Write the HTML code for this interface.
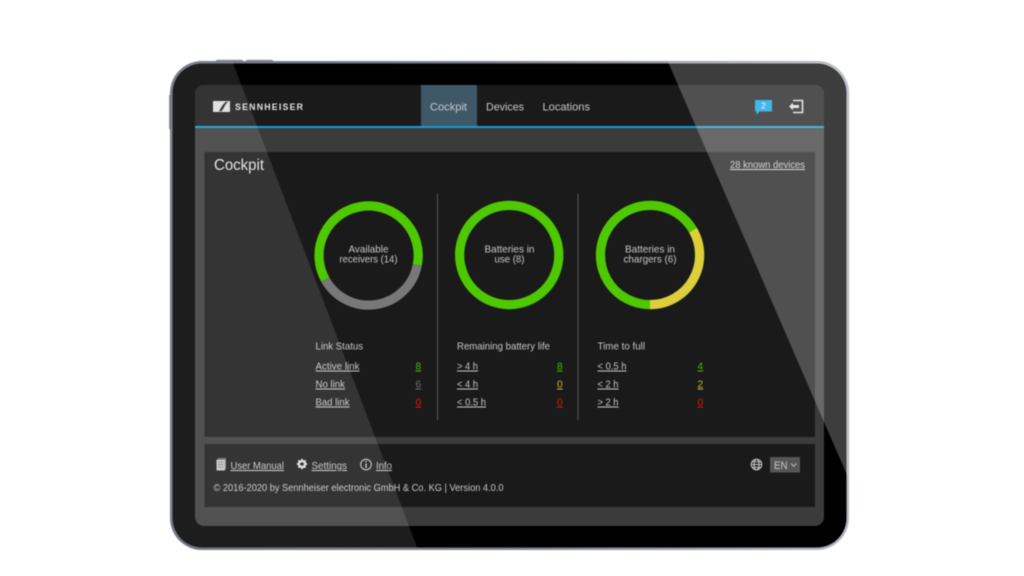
<!DOCTYPE html>
<html><head><meta charset="utf-8"><title>Cockpit</title>
<style>
html,body{margin:0;padding:0;background:#fff;width:1024px;height:576px;overflow:hidden}
svg{display:block;filter:blur(.4px)}
text{font-family:"Liberation Sans",sans-serif;fill:#c8c8c8;font-size:10.200px}
.u{text-decoration:underline}
.c{text-anchor:middle}
</style></head><body>
<svg width="1024" height="576" viewBox="0 0 1024 576" xmlns="http://www.w3.org/2000/svg">
<defs>
<linearGradient id="edge" x1="0" x2="1" y1="0" y2="0"><stop offset="0" stop-color="#6f7686"/><stop offset=".5" stop-color="#7e8390"/><stop offset="1" stop-color="#b2b7c2"/></linearGradient>
<clipPath id="body"><rect x="171" y="62" width="677" height="486" rx="31"/></clipPath>
</defs>
<!-- side buttons -->
<rect x="216" y="59.800" width="27" height="2" rx="1" fill="#8a8f9a"/>
<rect x="246" y="59.800" width="27" height="2" rx="1" fill="#8a8f9a"/>
<rect x="169.200" y="95" width="1.500" height="34" fill="#6d7280"/>
<!-- tablet -->
<rect x="170" y="61" width="679" height="489" rx="32" fill="url(#edge)"/>
<rect x="172.500" y="63.500" width="674" height="484" rx="29.500" fill="#000"/>
<!-- screen -->
<rect x="195" y="85" width="629" height="441" rx="9" fill="#3b3b3b"/>
<path d="M195 126V94a9 9 0 0 1 9-9H815a9 9 0 0 1 9 9V126Z" fill="#1a1a1a"/>
<rect x="421" y="85" width="56" height="41" fill="#3f5867"/>
<rect x="195" y="126" width="629" height="2" fill="#169bd0"/>
<!-- logo -->
<rect x="213" y="101" width="17" height="11" fill="#dedede"/>
<path d="M219 111.300C221.500 107 223 104 226 101.700H228C225 104 224 108 221.500 111.300Z" fill="#1a1a1a"/>
<text x="235" y="110" textLength="68" lengthAdjust="spacing" style="font-weight:700;font-size:8.800px;fill:#e2e2e2">SENNHEISER</text>
<!-- nav -->
<text x="430" y="110.500" textLength="37" lengthAdjust="spacingAndGlyphs" style="font-size:11px">Cockpit</text>
<text x="486" y="110.500" textLength="38" lengthAdjust="spacingAndGlyphs" style="font-size:11px">Devices</text>
<text x="542.500" y="110.500" textLength="47.500" lengthAdjust="spacingAndGlyphs" style="font-size:11px">Locations</text>
<!-- message icon -->
<path d="M755 100H772V111.500H759.500L756.500 115V111.500H755Z" fill="#0a9fe6"/>
<text x="763.500" y="108.500" class="c" style="font-size:8.500px;fill:#f0f8fc">2</text>
<!-- logout icon -->
<path d="M793 100.500H802.500V112.500H793" fill="none" stroke="#d8d8d8" stroke-width="1.600"/>
<path d="M789 106.500L793 102.800V105H799V108H793V110.200Z" fill="#e0e0e0"/>
<!-- main panel -->
<rect x="204.500" y="152" width="610.500" height="285" fill="#1a1a1a"/>
<text x="214" y="170" textLength="50" lengthAdjust="spacingAndGlyphs" style="font-size:15.500px;fill:#e0e0e0">Cockpit</text>
<text x="730" y="168" textLength="75" lengthAdjust="spacingAndGlyphs" class="u">28 known devices</text>
<rect x="437" y="194" width="1" height="226" fill="#5a5a5a"/>
<rect x="577.500" y="194" width="1" height="226" fill="#5a5a5a"/>
<!-- rings -->
<path d="M325.200 279.500A49.600 49.600 0 1 1 417.300 265" fill="none" stroke="#4ec900" stroke-width="9.200"/>
<path d="M417.300 265A49.600 49.600 0 0 1 325.200 279.500" fill="none" stroke="#787878" stroke-width="9.200"/>
<circle cx="509.200" cy="255" r="49.600" fill="none" stroke="#4ec900" stroke-width="9.200"/>
<path d="M693 230.200A49.600 49.600 0 1 0 650 304.600" fill="none" stroke="#4ec900" stroke-width="9.200"/>
<path d="M693 230.200A49.600 49.600 0 0 1 650 304.600" fill="none" stroke="#dccf3a" stroke-width="9.200"/>
<text x="368.500" y="252.500" class="c" textLength="40" lengthAdjust="spacingAndGlyphs">Available</text>
<text x="368.500" y="262.500" class="c" textLength="58" lengthAdjust="spacingAndGlyphs">receivers (14)</text>
<text x="509.500" y="252.500" class="c" textLength="50" lengthAdjust="spacingAndGlyphs">Batteries in</text>
<text x="509.500" y="262.500" class="c" textLength="30" lengthAdjust="spacingAndGlyphs">use (8)</text>
<text x="650" y="252.500" class="c" textLength="50" lengthAdjust="spacingAndGlyphs">Batteries in</text>
<text x="650" y="262.500" class="c" textLength="53" lengthAdjust="spacingAndGlyphs">chargers (6)</text>
<!-- col 1 -->
<text x="315.500" y="349.500" textLength="47.500" lengthAdjust="spacingAndGlyphs">Link Status</text>
<text x="315.500" y="369.500" textLength="44" lengthAdjust="spacingAndGlyphs" class="u">Active link</text>
<text x="315.500" y="387.500" textLength="29.500" lengthAdjust="spacingAndGlyphs" class="u">No link</text>
<text x="315.500" y="405.500" textLength="34" lengthAdjust="spacingAndGlyphs" class="u">Bad link</text>
<text x="415.500" y="369.500" class="u" style="fill:#4fb800">8</text>
<text x="415.500" y="387.500" class="u" style="fill:#6e6e6e">6</text>
<text x="415.500" y="405.500" class="u" style="fill:#d81e05">0</text>
<!-- col 2 -->
<text x="457" y="349.500" textLength="93" lengthAdjust="spacingAndGlyphs">Remaining battery life</text>
<text x="457" y="369.500" textLength="21" lengthAdjust="spacingAndGlyphs" class="u">&gt; 4 h</text>
<text x="457" y="387.500" textLength="21" lengthAdjust="spacingAndGlyphs" class="u">&lt; 4 h</text>
<text x="457" y="405.500" textLength="29" lengthAdjust="spacingAndGlyphs" class="u">&lt; 0.5 h</text>
<text x="557" y="369.500" class="u" style="fill:#4fb800">8</text>
<text x="557" y="387.500" class="u" style="fill:#c6ba2e">0</text>
<text x="557" y="405.500" class="u" style="fill:#d81e05">0</text>
<!-- col 3 -->
<text x="597.500" y="349.500" textLength="47.500" lengthAdjust="spacingAndGlyphs">Time to full</text>
<text x="597.500" y="369.500" textLength="29" lengthAdjust="spacingAndGlyphs" class="u">&lt; 0.5 h</text>
<text x="597.500" y="387.500" textLength="21" lengthAdjust="spacingAndGlyphs" class="u">&lt; 2 h</text>
<text x="597.500" y="405.500" textLength="21" lengthAdjust="spacingAndGlyphs" class="u">&gt; 2 h</text>
<text x="697.500" y="369.500" class="u" style="fill:#4fb800">4</text>
<text x="697.500" y="387.500" class="u" style="fill:#c6ba2e">2</text>
<text x="697.500" y="405.500" class="u" style="fill:#d81e05">0</text>
<!-- footer panel -->
<rect x="204.500" y="444" width="610.500" height="63" fill="#1a1a1a"/>
<!-- manual icon -->
<path d="M216.500 459.500H225V470.500H216.500Z" fill="#c4c4c4"/>
<path d="M218 458.500H225.500V469" fill="none" stroke="#9a9a9a" stroke-width=".8"/>
<path d="M218 462H223.500M218 464.500H223.500M218 467H223.500" stroke="#777" stroke-width=".7"/>
<text x="230.500" y="469" textLength="53.500" lengthAdjust="spacingAndGlyphs" class="u">User Manual</text>
<!-- gear icon -->
<circle cx="302" cy="464" r="3.200" fill="none" stroke="#dcdcdc" stroke-width="2.200"/>
<path d="M302 458.800V469.200M296.800 464H307.200M298.300 460.300L305.700 467.700M305.700 460.300L298.300 467.700" stroke="#dcdcdc" stroke-width="1.500"/>
<circle cx="302" cy="464" r="1.800" fill="#1a1a1a"/>
<text x="311.500" y="469" textLength="35.500" lengthAdjust="spacingAndGlyphs" class="u">Settings</text>
<!-- info icon -->
<circle cx="366" cy="464.500" r="5.300" fill="none" stroke="#cfcfcf" stroke-width="1"/>
<path d="M366 463.500V468M366 460.800V462.300" stroke="#dcdcdc" stroke-width="1.200"/>
<text x="376" y="469" textLength="16" lengthAdjust="spacingAndGlyphs" class="u">Info</text>
<text x="213.500" y="491" textLength="290" lengthAdjust="spacingAndGlyphs">© 2016-2020 by Sennheiser electronic GmbH &amp; Co. KG | Version 4.0.0</text>
<!-- globe -->
<g fill="none" stroke="#cfcfcf" stroke-width=".9">
<circle cx="756.500" cy="464.500" r="5.300"/>
<ellipse cx="756.500" cy="464.500" rx="2.500" ry="5.300"/>
<path d="M751.200 464.500H761.800M752 461.800H761M752 467.200H761"/>
</g>
<rect x="770" y="457" width="30" height="15.500" fill="#565656"/>
<text x="774" y="469" textLength="13.500" lengthAdjust="spacingAndGlyphs" style="font-size:11px;fill:#c8c8c8">EN</text>
<path d="M791 463.500L793.700 466.300L796.400 463.500" fill="none" stroke="#c8c8c8" stroke-width=".9"/>
<!-- glare -->
<g clip-path="url(#body)">
<polygon points="160,55 230,55 420,555 160,555" fill="#fff" fill-opacity=".115"/>
<polygon points="665,55 860,55 860,505" fill="#fff" fill-opacity=".24"/>
</g>
</svg>
</body></html>
